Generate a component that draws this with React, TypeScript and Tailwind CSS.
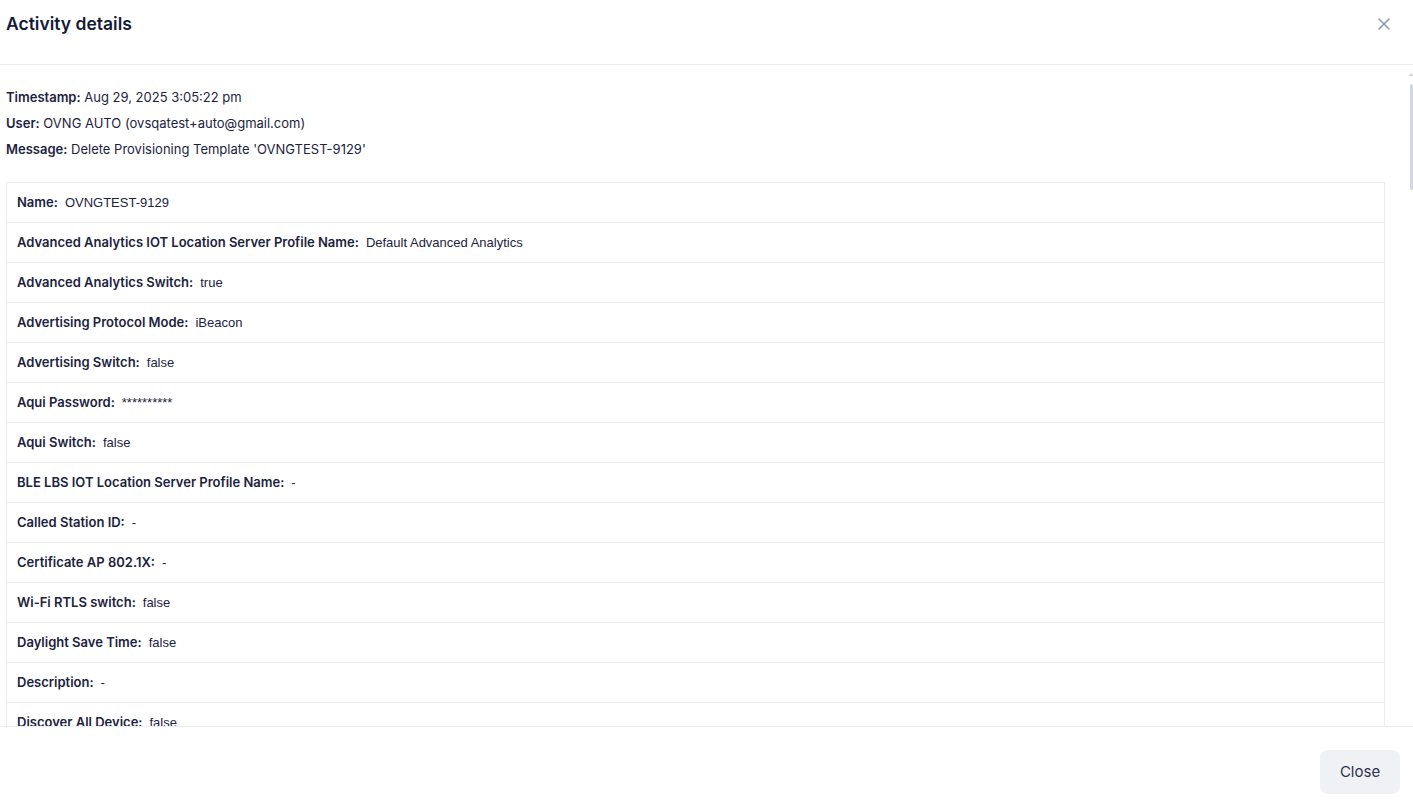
import React from "react";

const rows: [string, string][] = [
  ["Name:", "OVNGTEST-9129"],
  ["Advanced Analytics IOT Location Server Profile Name:", "Default Advanced Analytics"],
  ["Advanced Analytics Switch:", "true"],
  ["Advertising Protocol Mode:", "iBeacon"],
  ["Advertising Switch:", "false"],
  ["Aqui Password:", "**********"],
  ["Aqui Switch:", "false"],
  ["BLE LBS IOT Location Server Profile Name:", "-"],
  ["Called Station ID:", "-"],
  ["Certificate AP 802.1X:", "-"],
  ["Wi-Fi RTLS switch:", "false"],
  ["Daylight Save Time:", "false"],
  ["Description:", "-"],
  ["Discover All Device:", "false"],
  ["Group Name:", "-"],
  ["LED Mode:", "-"],
];

export default function App() {
  return (
    <div
      className="w-[1413px] h-[800px] bg-white flex flex-col overflow-hidden text-[#1b2340]"
      style={{ fontFamily: "Inter, 'Noto Sans', sans-serif" }}
    >
      <div className="h-[65px] shrink-0 border-b border-[#ececf1] flex items-center justify-between pl-[6px] pr-[22px]">
        <h1 className="text-[17.5px] font-semibold text-[#131b38] leading-none -mt-[16px]">Activity details</h1>
        <svg width="14" height="14" viewBox="0 0 14 14" className="-mt-[17px]">
          <path d="M2 2L12 12M12 2L2 12" stroke="#8f97b3" strokeWidth="1.6" strokeLinecap="round" />
        </svg>
      </div>
      <div className="relative flex-1 overflow-hidden border-b border-[#ececf1]">
        <div className="pl-[6px] pr-[28px] pt-[19px]">
          <div className="text-[13px] leading-[26px]">
            <div><span className="font-semibold">Timestamp:</span> Aug 29, 2025 3:05:22 pm</div>
            <div><span className="font-semibold">User:</span> OVNG AUTO (ovsqatest+auto@gmail.com)</div>
            <div><span className="font-semibold">Message:</span> Delete Provisioning Template 'OVNGTEST-9129'</div>
          </div>
          <div className="mt-[20px] border border-[#ececf1] border-b-0">
            {rows.map(([k, v]) => (
              <div key={k} className="h-[40px] border-b border-[#ececf1] flex items-center gap-[7px] px-[10px] pt-[1px] text-[13px]">
                <span className="font-semibold">{k}</span>
                <span style={{ fontFamily: "'Liberation Sans', Arial, sans-serif" }}>{v}</span>
              </div>
            ))}
          </div>
        </div>
        <div className="absolute right-0 top-[19px] w-[3px] h-[106px] bg-[#d3d6e4] rounded-sm" />
        <div className="absolute right-0 top-[8px] w-0 h-0 border-l-[2px] border-r-[2px] border-b-[3px] border-l-transparent border-r-transparent border-b-[#c9ccd9]" />
      </div>
      <div className="h-[73px] shrink-0 flex items-start justify-end pr-[13px] pt-[23px]">
        <button className="w-[80px] h-[44px] rounded-lg bg-[#f0f1f5] text-[15px] text-[#2b3350]">Close</button>
      </div>
    </div>
  );
}
